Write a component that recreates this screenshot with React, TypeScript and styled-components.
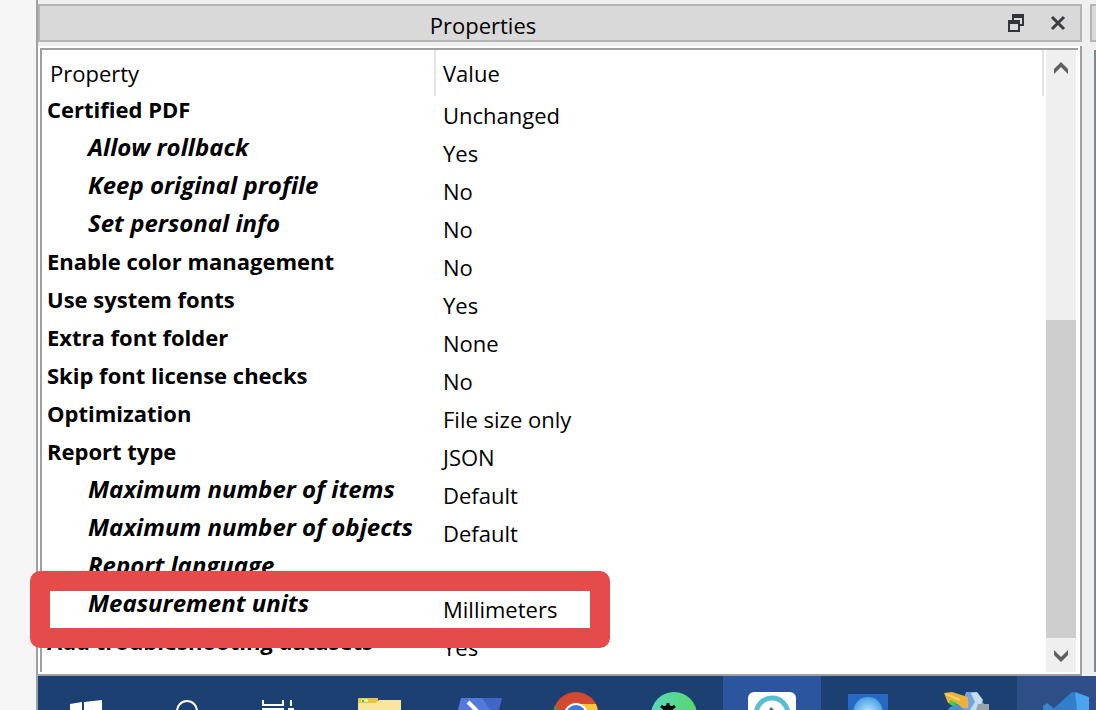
import React from "react";
import styled, { createGlobalStyle, css } from "styled-components";

const GlobalStyle = createGlobalStyle`
  * { box-sizing: border-box; }
  body {
    margin: 0;
    background: #f5f5f5;
    color: #000;
    font: 22px/26px "Open Sans", "Noto Sans", sans-serif;
  }
`;

const Screen = styled.div`
  display: flex;
  flex-direction: column;
  height: 100vh;
  margin-left: 36px;
  border-left: 2px solid #a0a0a0;
  background: #efefef;
`;

const Workspace = styled.main`
  display: flex;
  flex: 1;
  min-height: 0;
  gap: 8px;
`;

const Dock = styled.section`
  display: flex;
  flex: 1;
  flex-direction: column;
  min-width: 0;
  padding-top: 4px;
`;

const NextDock = styled.aside`
  display: flex;
  flex-direction: column;
  width: 6px;
  padding: 4px 0;
  overflow: hidden;
`;

const TitleBar = styled.header`
  display: flex;
  align-items: center;
  flex: none;
  height: 38px;
  padding-right: 10px;
  border: 2px solid #b4b4b4;
  background: #d9d9d9;
`;

const NextTitle = styled.div`
  flex: none;
  height: 38px;
  border: 2px solid #b4b4b4;
  border-right: 0;
  background: #d9d9d9;
`;

const NextBody = styled.div`
  flex: 1;
  margin: 8px 0 0 4px;
  background: #80868f;
`;

const Title = styled.h1`
  flex: 1;
  margin: 0;
  padding: 4px 60px 0 0;
  font-size: 22px;
  font-weight: 400;
  line-height: 26px;
  text-align: center;
`;

const IconButton = styled.button`
  display: flex;
  align-items: center;
  justify-content: center;
  width: 24px;
  height: 32px;
  margin-left: 18px;
  padding: 0;
  border: 0;
  background: none;
`;

const TreeFrame = styled.div`
  display: flex;
  flex: 1;
  min-height: 0;
  margin-top: 4px;
  padding: 2px;
  border-right: 2px solid #a0a0a0;
  border-bottom: 2px solid #a0a0a0;
  background: #fff;
`;

const TreeBody = styled.div`
  display: flex;
  flex: 1;
  min-width: 0;
  border-top: 2px solid #a0a0a0;
  border-left: 2px solid #a0a0a0;
`;

const TableArea = styled.div`
  flex: 1;
  min-width: 0;
`;

const Table = styled.table`
  width: 100%;
  table-layout: fixed;
  border-collapse: separate;
  border-spacing: 0;
`;

const HeadCell = styled.th<{ $first?: boolean }>`
  width: ${(p) => (p.$first ? "394px" : "auto")};
  height: 46px;
  padding: 0 7px;
  ${(p) => p.$first && "padding-left: 8px;"}
  border-right: 2px solid #e4e4e4;
  font-weight: 400;
  text-align: left;
`;

const NameCell = styled.th<{ $nested?: boolean }>`
  position: relative;
  height: 38px;
  padding: 0 0 0 5px;
  font-weight: 700;
  text-align: left;
  vertical-align: top;
  white-space: nowrap;
  ${(p) => p.$nested && css`
    padding-left: 46px;
    font-size: 24px;
    font-style: italic;
  `}
`;

const ValueCell = styled.td`
  height: 38px;
  padding: 6px 0 0 7px;
  vertical-align: top;
`;

const Highlight = styled.span`
  position: absolute;
  z-index: 1;
  top: -19px;
  left: -12px;
  width: 580px;
  height: 77px;
  border: 20px solid #e54b4a;
  border-radius: 10px;
  pointer-events: none;
`;

const ScrollBar = styled.div`
  display: flex;
  flex-direction: column;
  width: 34px;
  border-right: 2px solid #fff;
  border-left: 2px solid #fff;
  background: #efefef;
`;

const ScrollButton = styled.button`
  display: flex;
  align-items: center;
  justify-content: center;
  flex: none;
  height: 34px;
  padding: 2px 0 0;
  border: 0;
  background: none;
`;

const ScrollTrack = styled.div`
  display: flex;
  flex: 1;
  flex-direction: column;
  justify-content: flex-end;
`;

const ScrollThumb = styled.div`
  height: 57.4%;
  background: #cdcdcd;
`;

const Taskbar = styled.nav`
  display: flex;
  flex: none;
  height: 34px;
  background: #1c4072;
  overflow: hidden;
`;

const AppGroup = styled.div`
  display: flex;
  margin-left: 15px;
`;

const TaskButton = styled.button<{ $width?: number; $tone?: string }>`
  display: block;
  flex: none;
  width: ${(p) => p.$width ?? 98}px;
  height: 34px;
  padding: 0;
  border: 0;
  background: ${(p) => p.$tone ?? "transparent"};
  svg { display: block; margin: 0 auto; }
`;

type Property = { name: string; value: string; nested?: boolean; marked?: boolean };

const properties: Property[] = [
  { name: "Certified PDF", value: "Unchanged" },
  { name: "Allow rollback", value: "Yes", nested: true },
  { name: "Keep original profile", value: "No", nested: true },
  { name: "Set personal info", value: "No", nested: true },
  { name: "Enable color management", value: "No" },
  { name: "Use system fonts", value: "Yes" },
  { name: "Extra font folder", value: "None" },
  { name: "Skip font license checks", value: "No" },
  { name: "Optimization", value: "File size only" },
  { name: "Report type", value: "JSON" },
  { name: "Maximum number of items", value: "Default", nested: true },
  { name: "Maximum number of objects", value: "Default", nested: true },
  { name: "Report language", value: "", nested: true },
  { name: "Measurement units", value: "Millimeters", nested: true, marked: true },
  { name: "Add troubleshooting datasets", value: "Yes" },
];

const Glyph = ({ children }: { children: React.ReactNode }) => (
  <svg width="60" height="34" viewBox="0 0 60 34" aria-hidden="true">{children}</svg>
);

const Chevron = ({ down }: { down?: boolean }) => (
  <svg width="16" height="12" viewBox="0 0 16 12" aria-hidden="true">
    <path
      d={down ? "M1 0L8 7L15 0V5L8 12L1 5Z" : "M1 12L8 5L15 12V7L8 0L1 7Z"}
      fill="#606060"
    />
  </svg>
);

export default function App() {
  return (
    <>
      <GlobalStyle />
      <Screen>
        <Workspace>
          <Dock>
            <TitleBar>
              <Title>Properties</Title>
              <IconButton aria-label="Float">
                <svg width="16" height="18" viewBox="0 0 16 18" aria-hidden="true">
                  <path d="M4 0H16V12H12V10H14V4H6V6H4Z" fill="#31343a" />
                  <path d="M0 6H12V18H0ZM2 10V16H10V10Z" fill="#31343a" fillRule="evenodd" />
                </svg>
              </IconButton>
              <IconButton aria-label="Close">
                <svg width="16" height="16" viewBox="0 0 16 16" aria-hidden="true">
                  <path d="M2 2L14 14M14 2L2 14" stroke="#3c3e42" strokeWidth="3" />
                </svg>
              </IconButton>
            </TitleBar>
            <TreeFrame>
              <TreeBody>
                <TableArea>
                  <Table>
                    <thead>
                      <tr>
                        <HeadCell $first scope="col">Property</HeadCell>
                        <HeadCell scope="col">Value</HeadCell>
                      </tr>
                    </thead>
                    <tbody>
                      {properties.map((p) => (
                        <tr key={p.name}>
                          <NameCell scope="row" $nested={p.nested}>
                            {p.name}
                            {p.marked && <Highlight />}
                          </NameCell>
                          <ValueCell>{p.value}</ValueCell>
                        </tr>
                      ))}
                    </tbody>
                  </Table>
                </TableArea>
                <ScrollBar>
                  <ScrollButton aria-label="Scroll up"><Chevron /></ScrollButton>
                  <ScrollTrack><ScrollThumb /></ScrollTrack>
                  <ScrollButton aria-label="Scroll down"><Chevron down /></ScrollButton>
                </ScrollBar>
              </TreeBody>
            </TreeFrame>
          </Dock>
          <NextDock>
            <NextTitle />
            <NextBody />
          </NextDock>
        </Workspace>
        <Taskbar>
          <TaskButton $width={96} aria-label="Start">
            <Glyph>
              <path d="M14 28L26 26V34H14ZM28 26L46 24V34H28Z" fill="#fff" />
            </Glyph>
          </TaskButton>
          <TaskButton $width={106} aria-label="Search">
            <Glyph>
              <circle cx="30" cy="35" r="10" fill="none" stroke="#fff" strokeWidth="2" />
            </Glyph>
          </TaskButton>
          <TaskButton $width={76} aria-label="Task view">
            <Glyph>
              <path d="M15 24V29H35V24M15 34V33H35V34" fill="none" stroke="#fff" strokeWidth="2" />
              <path d="M43 24V30M40 33H46" stroke="#fff" strokeWidth="2" />
            </Glyph>
          </TaskButton>
          <AppGroup>
            <TaskButton aria-label="File Explorer">
              <Glyph>
                <path d="M8 22H28V34H8Z" fill="#e8c53c" />
                <path d="M8 27H26L29 24H51V34H8Z" fill="#f9e69c" />
                <path d="M11 23H18V26H11Z" fill="#d9efb0" />
                <path d="M12 24H14V26H12Z" fill="#35b36a" />
              </Glyph>
            </TaskButton>
            <TaskButton aria-label="PowerShell">
              <Glyph>
                <path d="M13 22H54L51 34H10Z" fill="#3f66c4" />
                <path d="M13 22H34L42 34H10Z" fill="#5478db" />
                <path d="M20 26L29 35" stroke="#fff" strokeWidth="4" />
              </Glyph>
            </TaskButton>
            <TaskButton aria-label="Chrome">
              <Glyph>
                <circle cx="30" cy="39" r="23" fill="#d34a31" />
                <path d="M30 28H50L53 39H30Z" fill="#f9c637" />
                <path d="M9 29L16 40H7Z" fill="#37a04e" />
                <circle cx="30" cy="39" r="12" fill="#fff" />
                <circle cx="30" cy="39" r="10" fill="#4079dc" />
              </Glyph>
            </TaskButton>
            <TaskButton aria-label="Android Studio">
              <Glyph>
                <defs>
                  <linearGradient id="mint">
                    <stop offset="0" stopColor="#59d8bc" />
                    <stop offset="1" stopColor="#58d66b" />
                  </linearGradient>
                </defs>
                <circle cx="30" cy="39" r="23" fill="url(#mint)" />
                <circle cx="24" cy="34" r="5" fill="#101010" />
                <path d="M24 27V34M17 30L24 35L31 30" stroke="#101010" strokeWidth="3" />
              </Glyph>
            </TaskButton>
            <TaskButton $tone="#2b559c" aria-label="Current application">
              <Glyph>
                <rect x="6" y="16" width="48" height="48" rx="6" fill="#fff" />
                <circle cx="30" cy="38" r="16" fill="none" stroke="#58bfd2" strokeWidth="5" />
                <path d="M27 34L29 31L32 34Z" fill="#4560bc" />
              </Glyph>
            </TaskButton>
            <TaskButton aria-label="Viewer">
              <Glyph>
                <defs>
                  <radialGradient id="lens">
                    <stop offset="0" stopColor="#b8e7fa" />
                    <stop offset="1" stopColor="#4ba1e6" />
                  </radialGradient>
                </defs>
                <rect x="8" y="18" width="40" height="40" fill="#2868c5" />
                <circle cx="28" cy="36" r="15" fill="url(#lens)" />
              </Glyph>
            </TaskButton>
            <TaskButton aria-label="Tools">
              <Glyph>
                <path d="M28 16H38L46 28V34H22Z" fill="#79a3df" />
                <path d="M33 17L37 26L32 34H40L45 24L39 16Z" fill="#c4ddf2" />
                <path d="M6 17L14 16L30 21V32H24L17 27L10 27Z" fill="#edb13d" />
                <path d="M8 18L22 24" stroke="#f7d568" strokeWidth="2" />
                <path d="M12 24L19 27L17 31L11 28Z" fill="#41cf42" />
                <path d="M12 31L20 28L26 34H10Z" fill="#4a91d0" />
                <path d="M40 28H51V34H38Z" fill="#9ba4ad" />
              </Glyph>
            </TaskButton>
            <TaskButton $tone="#2d4e87" aria-label="Visual Studio Code">
              <Glyph>
                <path d="M7 30L11 27L20 34H7Z" fill="#3788cf" />
                <path d="M16 34L36 16L42 17V34Z" fill="#2f7fcb" />
                <path d="M39 16L53 21V34H41Z" fill="#4ba4ee" />
              </Glyph>
            </TaskButton>
          </AppGroup>
        </Taskbar>
      </Screen>
    </>
  );
}
